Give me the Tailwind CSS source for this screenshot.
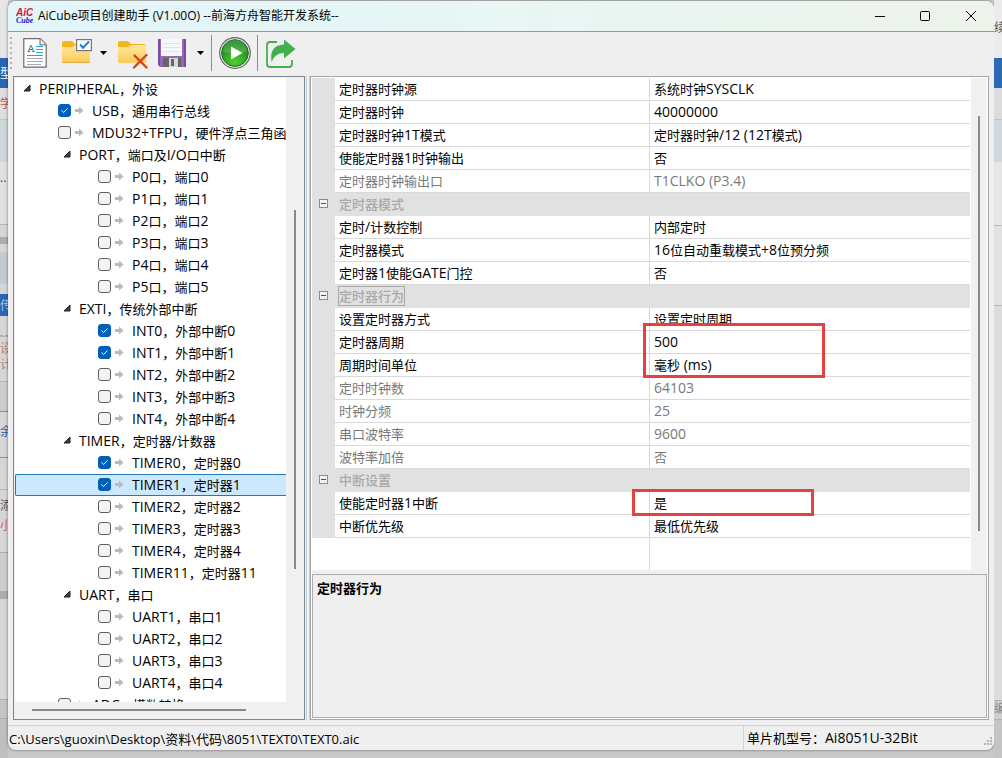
<!DOCTYPE html>
<html lang="zh-CN">

<head>
    <meta charset="UTF-8">
    <meta name="viewport" content="width=device-width, initial-scale=1.0">
    <title>AiCube项目创建助手</title>
    <script src="https://cdn.jsdelivr.net/npm/@tailwindcss/browser@4"></script>
</head>

<body class="flex h-screen overflow-hidden bg-[#c9c9c9] font-['Open_Sans','Noto_Sans_CJK_SC',sans-serif] text-[13px] text-black">

    <!-- Desktop behind the window, left edge -->
    <div class="w-2 shrink-0 overflow-hidden bg-[#d6d6d6] flex flex-col text-[12px] leading-4">
        <div class="h-[58px] bg-[#e6e6e6]"></div>
        <div class="h-[30px] bg-[#2b66b4] text-white pt-2">型</div>
        <div class="h-8 bg-[#dedede] text-[#d8453c] pt-2 border-b border-[#c4c4c4]">学</div>
        <div class="h-[42px] bg-[#cdd6da]"></div>
        <div class="h-[63px] bg-[#e0e0e0] border-b border-[#b9b9b9] pt-2 text-[#444]">..</div>
        <div class="h-3"></div>
        <div class="h-[7px] bg-[#acacac]"></div>
        <div class="h-2"></div>
        <div class="h-[32px] bg-[#c3cbd1]"></div>
        <div class="h-[10px]"></div>
        <div class="h-[22px] bg-[#2b66b4] text-[#a8c8ea] pt-1">传</div>
        <div class="h-[20px] border-b border-dashed border-[#aaa]"></div>
        <div class="h-[46px] text-[#b98080] pt-1 border-y border-[#b5b5b5]">设计</div>
        <div class="h-[30px] border-b border-[#8f8f8f] bg-[#cccccc]"></div>
        <div class="h-[46px] pt-3 text-[#2f5f9c] border-b border-[#8f8f8f]">余</div>
        <div class="h-8 border-b border-[#b8b8b8]"></div>
        <div class="h-[62px] pt-2 text-[#555]">添<div class="text-[#d8635c] pt-1">小</div></div>
        <div class="h-[40px] bg-[#cdcdcd] border-y border-[#adadad]"></div>
        <div class="h-[7px] bg-[#acacac]"></div>
        <div class="h-[100px]"></div>
        <div class="h-5 bg-[#c4c4c4] border-y border-[#adadad]"></div>
        <div class="flex-1 bg-[#bfbfbf]"></div>
    </div>

    <div class="min-w-0 flex-1 flex flex-col pt-px pb-[8px]">
        <main class="flex-1 min-h-0 flex flex-col overflow-hidden rounded-lg bg-[#efefef] shadow-[0_0_3px_rgba(0,0,0,0.5)]">

            <!-- Title bar -->
            <header class="h-[31px] shrink-0 flex items-center border-b border-[#8f9a9a] bg-linear-to-r from-[#e2f5f9] via-[#e8f6f4] to-[#edf3ea]">
                <svg class="ml-2 w-[17px] h-4 shrink-0" viewBox="0 0 17 16">
                    <text x="0" y="8" font-family="Liberation Sans" font-size="10" font-style="italic" font-weight="bold" fill="#d4143f">AiC</text>
                    <text x="0" y="15" font-family="Liberation Serif" font-size="8" font-style="italic" font-weight="bold" fill="#1414d8">Cube</text>
                </svg>
                <h1 class="ml-[5px] flex-1 text-[12px] leading-5 whitespace-nowrap">AiCube项目创建助手 (V1.00O) --前海方舟智能开发系统--</h1>
                <button class="w-[45px] h-full flex items-center justify-center" aria-label="最小化">
                    <svg class="w-[10px] h-[10px]" viewBox="0 0 10 10" stroke="#000"><path d="M0 5.5h10" /></svg>
                </button>
                <button class="w-[45px] h-full flex items-center justify-center" aria-label="最大化">
                    <svg class="w-[10px] h-[10px]" viewBox="0 0 10 10" fill="none" stroke="#000"><rect x=".5" y=".5" width="9" height="9" rx="1" /></svg>
                </button>
                <button class="w-[47px] h-full flex items-center justify-center" aria-label="关闭">
                    <svg class="w-[10px] h-[10px]" viewBox="0 0 10 10" stroke="#000"><path d="M0 0l10 10M10 0L0 10" /></svg>
                </button>
            </header>

            <!-- Toolbar -->
            <nav class="h-11 shrink-0 flex items-center pl-[2px] pb-[2px]">
                <svg class="w-1 h-[40px]" viewBox="0 0 4 40" fill="#b4b4b4">
                    <path d="M0 4h2v2H0zM0 9h2v2H0zM0 14h2v2H0zM0 19h2v2H0zM0 24h2v2H0zM0 29h2v2H0zM0 34h2v2H0z" />
                </svg>
                <button class="ml-[9px]" aria-label="新建">
                    <svg class="w-6 h-8" viewBox="0 0 24 32">
                        <path d="M.8 1.700h16.500l5.900 6v22.500H.8z" fill="#fff" stroke="#6b6b6b" stroke-width="1.200" />
                        <path d="M17 1.700v6.200h6" fill="#eee" stroke="#6b6b6b" />
                        <path d="M5.500 14.500l2.200-6h.6l2.200 6M6.500 12.500h3M4.500 14.500h2.500M9.300 14.500h2.500" fill="none" stroke="#1d7fb8" />
                        <path d="M13 9.500h7M13 12.500h7M13 15.500h7M4 18.500h16" stroke="#28a5dc" />
                        <path d="M4 21.500h16M4 24.500h16M4 27.500h14" stroke="#a9a6ba" />
                    </svg>
                </button>
                <button class="ml-[14px]" aria-label="打开">
                    <svg class="w-8 h-8" viewBox="0 0 32 32">
                        <path d="M1 6q0-2 2-2h8l3 3h13q2 0 2 2v5H1z" fill="#f6b51e" />
                        <path d="M1 10h10l4-2h14v17q0 1-1 1H2q-1 0-1-1z" fill="url(#folder)" />
                        <path d="M1.500 25.500h27" stroke="#e6ae3c" />
                        <rect x="15.600" y="2.600" width="14.800" height="11" fill="#fff" stroke="#777" stroke-width="1.200" />
                        <path d="M19 7.500l3 3.200 6-6.200" fill="none" stroke="#1b7fe0" stroke-width="2" />
                        <defs>
                            <linearGradient id="folder" x1="0" y1="0" x2="0" y2="1">
                                <stop offset="0" stop-color="#ffe69a" />
                                <stop offset="1" stop-color="#fbcb5c" />
                            </linearGradient>
                        </defs>
                    </svg>
                </button>
                <button class="ml-[7px]" aria-label="打开选项">
                    <svg class="w-[7px] h-1" viewBox="0 0 7 4"><path d="M0 0h7L3.500 4z" /></svg>
                </button>
                <button class="ml-[10px]" aria-label="关闭项目">
                    <svg class="w-8 h-8" viewBox="0 0 32 32">
                        <path d="M1 6q0-2 2-2h8l3 3h13q2 0 2 2v5H1z" fill="#f6b51e" />
                        <path d="M1 10h10l4-2h14v17q0 1-1 1H2q-1 0-1-1z" fill="url(#folder)" />
                        <path d="M17.500 18.500l12 12M29.500 18l-12.500 12.500" stroke="#d2451e" stroke-width="2.400" stroke-linecap="round" />
                    </svg>
                </button>
                <button class="ml-[7px]" aria-label="保存">
                    <svg class="w-8 h-8" viewBox="0 0 32 32">
                        <path d="M2 2h28v28H4l-2-2z" fill="#9568b6" />
                        <path d="M2 2h2v27l-2-1zM28 2h2v28h-2z" fill="#7a4ba2" />
                        <path d="M5 2h21v17H5z" fill="#f4f7fb" />
                        <path d="M7 6.500h17M7 10.500h17M7 14.500h17" stroke="#dce3ec" />
                        <path d="M7 21h18v9H7z" fill="#666" />
                        <path d="M13 21h9v9h-9z" fill="#d5d5da" />
                        <path d="M15 22h3v7h-3z" fill="#66666c" />
                    </svg>
                </button>
                <button class="ml-[9px]" aria-label="保存选项">
                    <svg class="w-[7px] h-1" viewBox="0 0 7 4"><path d="M0 0h7L3.500 4z" /></svg>
                </button>
                <span class="ml-[7px] w-px h-9 bg-[#8c8c8c]"></span>
                <button class="ml-[7px]" aria-label="运行">
                    <svg class="w-8 h-8" viewBox="0 0 32 32">
                        <circle cx="16" cy="16" r="15.300" fill="#e4e4e4" stroke="#666" stroke-width="1.200" />
                        <circle cx="16" cy="16" r="13.300" fill="url(#ball)" stroke="#176b1b" />
                        <path d="M4 15a12 12 0 0 1 24-1q-8 4-24 1z" fill="#fff" opacity=".16" />
                        <path d="M12 9.500l11.500 6.500L12 22.500z" fill="#fff" />
                        <defs>
                            <radialGradient id="ball" cx=".5" cy=".85" r=".8">
                                <stop offset="0" stop-color="#52d22c" />
                                <stop offset="1" stop-color="#147f1c" />
                            </radialGradient>
                        </defs>
                    </svg>
                </button>
                <span class="ml-[6px] w-px h-9 bg-[#8c8c8c]"></span>
                <button class="ml-[7px]" aria-label="导出">
                    <svg class="w-8 h-8" viewBox="0 0 32 32">
                        <path d="M12 5H5q-3 0-3 3v19q0 3 3 3h19q3 0 3-3v-4" fill="none" stroke="#43b04e" stroke-width="1.800" />
                        <path d="M6.500 25Q4 8 19 7.500V2.500l11.500 9.500L19 21.500V16Q10 16 6.500 25z" fill="#43b04e" />
                    </svg>
                </button>
            </nav>

            <div class="flex-1 min-h-0 flex pl-[5px] pr-[5px]">

                <!-- Peripheral tree -->
                <section class="w-[292px] shrink-0 flex flex-col border border-[#7f868e] bg-[#f0f0f0] p-px">
                    <div class="flex-1 min-h-0 flex">
                        <ul id="tree" class="flex-1 min-w-0 overflow-hidden bg-white whitespace-nowrap"></ul>
                        <div class="w-[17px] shrink-0 flex justify-center pt-[132px]">
                            <div class="w-[2px] h-[359px] bg-[#8a8a8a]"></div>
                        </div>
                    </div>
                    <div class="h-4 shrink-0 flex items-center pl-[17px]">
                        <div class="w-[214px] h-[2px] bg-[#8a8a8a]"></div>
                    </div>
                </section>

                <div class="ml-px w-1 shrink-0 border-x border-[#b9d3dc] bg-[#f3f3f3]"></div>

                <!-- Property grid -->
                <section class="min-w-0 flex-1 flex flex-col border border-[#a5a5a5] bg-white p-px">
                    <div class="relative flex-1 min-h-0 flex">
                        <div class="flex-1 min-w-0 flex flex-col">
                            <table class="w-full table-fixed border-separate border-spacing-0">
                                <colgroup>
                                    <col class="w-[23px]">
                                    <col class="w-[315px]">
                                    <col>
                                </colgroup>
                                <tbody id="props"></tbody>
                            </table>
                            <div class="flex-1 w-[338px] border-r border-[#d9d9d9]"></div>
                        </div>
                        <div class="ml-px w-4 shrink-0 flex justify-center bg-[#f0f0f0] pt-[38px]">
                            <div class="w-[2px] h-[415px] bg-[#8a8a8a]"></div>
                        </div>
                        <!-- Highlight frames over the value column -->
                        <div class="absolute left-[331px] top-[245px] w-[182px] h-[55px] border-3 border-[#e64040]"></div>
                        <div class="absolute left-[320px] top-[411px] w-[182px] h-[27px] border-3 border-[#e64040]"></div>
                    </div>
                    <div class="h-1 shrink-0 bg-[#efefef]"></div>
                    <div class="h-36 shrink-0 border border-[#acacac] bg-[#efefef] px-1 pt-[3px]">
                        <h2 class="font-bold leading-5">定时器行为</h2>
                    </div>
                </section>
            </div>

            <!-- Status bar -->
            <footer class="mt-[5px] h-[25px] shrink-0 flex items-center border-t border-[#d5d5d5] leading-5">
                <p class="flex-1 pl-px pt-[2px] whitespace-nowrap">C:\Users\guoxin\Desktop\资料\代码\8051\TEXT0\TEXT0.aic</p>
                <p id="chip" class="w-[252px] h-full pt-[2px] pl-[3px] border-l border-[#d5d5d5] whitespace-nowrap"></p>
                <svg class="-ml-3 mr-px mt-2 w-[10px] h-[10px] shrink-0" viewBox="0 0 10 10" fill="#b5b5b5">
                    <path d="M7 0h2v2H7zM4 3h2v2H4zM7 3h2v2H7zM1 6h2v2H1zM4 6h2v2H4zM7 6h2v2H7z" />
                </svg>
            </footer>
        </main>
    </div>

    <!-- Desktop behind the window, right edge -->
    <div class="w-2 shrink-0 overflow-hidden bg-[#dcdcdc] flex flex-col text-[12px] leading-4">
        <div class="h-[58px] bg-[#ebebeb] text-[#555] pt-5">续</div>
        <div class="h-[30px] bg-[#2f68b5]"></div>
        <div class="h-8 bg-[#dcdcdc] border-b border-[#c4c4c4]"></div>
        <div class="h-[42px] bg-[#cfd8dd]"></div>
        <div class="h-[64px] bg-[#e6e6e6] border-b border-[#bdbdbd]"></div>
        <div class="h-[80px] bg-[#e2e2e2] border-b border-[#bdbdbd]"></div>
        <div class="h-[394px]"></div>
        <div class="h-5 bg-[#cfcfcf] border-y border-[#b0b0b0] text-[#7d8a90]">编</div>
        <div class="flex-1 bg-[#c4c4c4]"></div>
    </div>

    <script>
        // level, label, state: 'open' = expanded group, true/false = checkbox
        const nodes = [
            [0, 'PERIPHERAL，外设', 'open'],
            [1, 'USB，通用串行总线', true],
            [1, 'MDU32+TFPU，硬件浮点三角函数', false],
            [1, 'PORT，端口及I/O口中断', 'open'],
            [2, 'P0口，端口0', false],
            [2, 'P1口，端口1', false],
            [2, 'P2口，端口2', false],
            [2, 'P3口，端口3', false],
            [2, 'P4口，端口4', false],
            [2, 'P5口，端口5', false],
            [1, 'EXTI，传统外部中断', 'open'],
            [2, 'INT0，外部中断0', true],
            [2, 'INT1，外部中断1', true],
            [2, 'INT2，外部中断2', false],
            [2, 'INT3，外部中断3', false],
            [2, 'INT4，外部中断4', false],
            [1, 'TIMER，定时器/计数器', 'open'],
            [2, 'TIMER0，定时器0', true],
            [2, 'TIMER1，定时器1', true],
            [2, 'TIMER2，定时器2', false],
            [2, 'TIMER3，定时器3', false],
            [2, 'TIMER4，定时器4', false],
            [2, 'TIMER11，定时器11', false],
            [1, 'UART，串口', 'open'],
            [2, 'UART1，串口1', false],
            [2, 'UART2，串口2', false],
            [2, 'UART3，串口3', false],
            [2, 'UART4，串口4', false],
            [1, 'ADC，模数转换', false],
        ];

        // name, value, read-only; a row with only a name is a category
        const props = [
            ['定时器时钟源', '系统时钟SYSCLK'],
            ['定时器时钟', '40000000'],
            ['定时器时钟1T模式', '定时器时钟/12 (12T模式)'],
            ['使能定时器1时钟输出', '否'],
            ['定时器时钟输出口', 'T1CLKO (P3.4)', true],
            ['定时器模式'],
            ['定时/计数控制', '内部定时'],
            ['定时器模式', '16位自动重载模式+8位预分频'],
            ['定时器1使能GATE门控', '否'],
            ['定时器行为'],
            ['设置定时器方式', '设置定时周期'],
            ['定时器周期', '500'],
            ['周期时间单位', '毫秒 (ms)'],
            ['定时时钟数', '64103', true],
            ['时钟分频', '25', true],
            ['串口波特率', '9600', true],
            ['波特率加倍', '否', true],
            ['中断设置'],
            ['使能定时器1中断', '是'],
            ['中断优先级', '最低优先级'],
        ];

        // Latin runs are set one pixel larger than the Chinese text
        const mix = text => text.replace(/[\x20-\x7e]+/g, run => `<span class="text-[14px]">${run}</span>`);

        const groupPad = ['pl-2', 'pl-12'];
        const leafPad = ['', 'pl-[42px]', 'pl-[82px]'];

        document.getElementById('tree').innerHTML = nodes.map(([level, label, state], i) => {
            if (state === 'open') {
                return `<li class="h-[22px] flex items-center ${groupPad[level]}">
                    <svg class="w-2 h-2 mb-[2px] mr-2 shrink-0" viewBox="0 0 8 8"><path d="M7 1v6H1z" fill="#404040" stroke="#222"/></svg>
                    <span>${mix(label)}</span></li>`;
            }
            const selected = label.startsWith('TIMER1，')
                ? 'border border-r-0 border-[#2577b5] bg-[#cce8ff] rounded-l-xs'
                : 'border border-r-0 border-transparent';
            return `<li class="h-[22px] flex items-center ${selected}">
                <span class="${leafPad[level]} mb-px grid shrink-0">
                    <input type="checkbox" id="node${i}" ${state ? 'checked' : ''}
                        class="peer col-start-1 row-start-1 w-[13px] h-[13px] appearance-none rounded-[3px] border border-[#5f5f5f] bg-[#f3f3f3] checked:border-[#005fb8] checked:bg-[#005fb8]">
                    <svg class="hidden peer-checked:block pointer-events-none col-start-1 row-start-1 w-[13px] h-[13px]" viewBox="0 0 13 13"><path d="M3.500 6.500l2 2 4-4" fill="none" stroke="#fff"/></svg>
                </span>
                <svg class="ml-1 mb-px w-[9px] h-[9px] shrink-0" viewBox="0 0 9 9"><path d="M0 3h4V.5l4.500 4-4.500 4V6H0z" fill="#b9b9b9"/></svg>
                <label for="node${i}" class="ml-2">${mix(label)}</label></li>`;
        }).join('');

        document.getElementById('props').innerHTML = props.map(([name, value, readonly], i) => {
            if (value === undefined) {
                const focus = name === '定时器行为' ? 'outline outline-[#a9a9a9]' : '';
                return `<tr class="h-[23px] bg-[#e1e1e1] text-[#a9a9a9]">
                    <td class="p-0 pb-[2px]"><button class="block mx-auto" aria-label="折叠"><svg class="w-[9px] h-[9px]" viewBox="0 0 9 9"><rect x=".5" y=".5" width="8" height="8" fill="#f4f4f4" stroke="#8c8c8c"/><path d="M2 4.500h5" stroke="#3c4f8c"/></svg></button></td>
                    <th colspan="2" class="p-0 pl-1 pb-px text-left font-medium leading-5"><span class="${focus}">${name}</span></th></tr>`;
            }
            return `<tr class="h-[23px] leading-5 ${readonly ? 'text-[#787878]' : ''}">
                <td class="bg-[#e1e1e1]"></td>
                <th class="p-0 pl-1 text-left font-normal border-b border-r border-[#d9d9d9]">${mix(name)}</th>
                <td class="p-0 pl-1 border-b border-[#d9d9d9]">${mix(value)}</td></tr>`;
        }).join('');

        document.getElementById('chip').innerHTML = mix('单片机型号：Ai8051U-32Bit');
    </script>
</body>

</html>
